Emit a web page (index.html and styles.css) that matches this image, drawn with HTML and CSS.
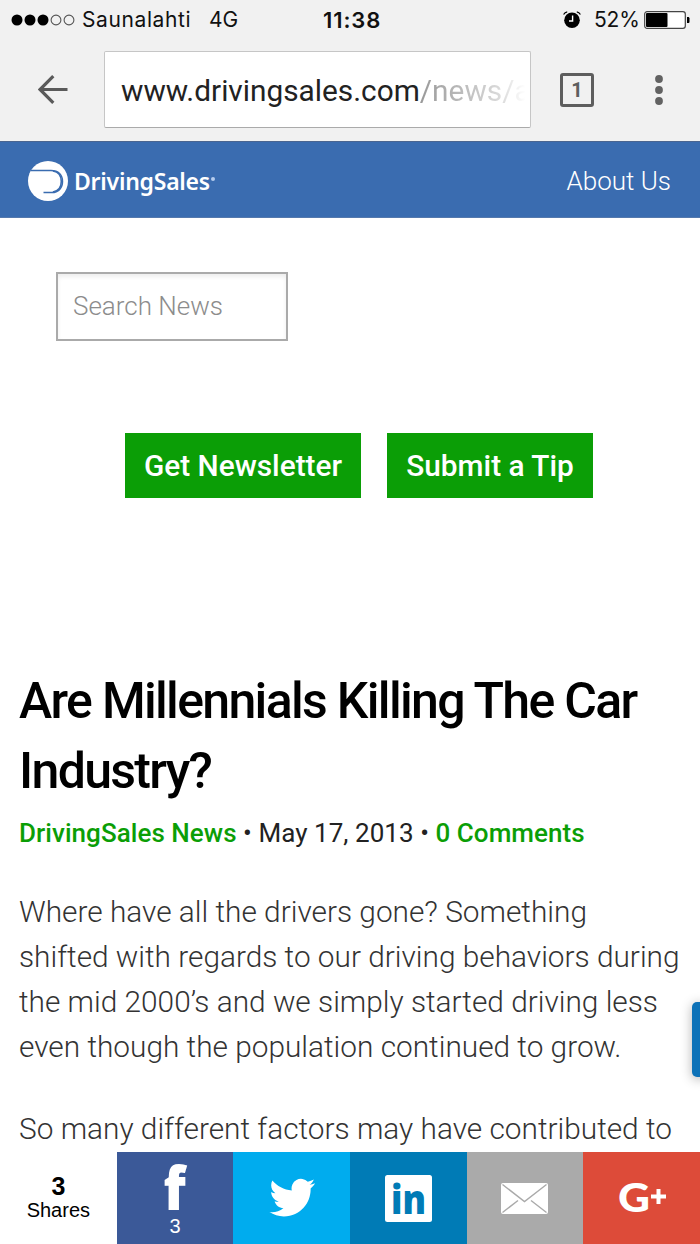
FILE: index.html
```html
<!DOCTYPE html>
<html lang="en">
<head>
    <meta charset="utf-8">
    <title>Are Millennials Killing The Car Industry?</title>
    <link rel="stylesheet" href="styles.css">
</head>
<body>
    <div class="screen">
        <!-- Status bar -->
        <div class="status">
            <svg class="signal" width="64" height="12" viewBox="0 0 64 12">
                <circle cx="6" cy="6" r="5.5"/>
                <circle cx="19" cy="6" r="5.5"/>
                <circle cx="32" cy="6" r="5.5"/>
                <circle class="empty" cx="45" cy="6" r="4.9"/>
                <circle class="empty" cx="58" cy="6" r="4.9"/>
            </svg>
            <span class="carrier">Saunalahti</span>
            <span class="network">4G</span>
            <span class="time">11:38</span>
            <svg class="alarm" width="18" height="18" viewBox="0 0 18 18">
                <circle cx="9" cy="9.3" r="7.8"/>
                <path class="bell" d="M0.6 3.6C1.4 2 2.6 1 4.2 0.8M17.4 3.6C16.6 2 15.4 1 13.8 0.8"/>
                <path class="hands" d="M9.6 4.6V10H6"/>
            </svg>
            <span class="percent">52%</span>
            <svg class="battery" width="46" height="18" viewBox="0 0 46 18">
                <rect x="0.7" y="0.7" width="40.6" height="16.6" rx="2.4" fill="#fff" stroke="#444" stroke-width="1.2"/>
                <rect x="2" y="2" width="21.5" height="14" rx="1"/>
                <path d="M43 6h1c1 0 1.5.6 1.5 1.5v3c0 1-.5 1.5-1.5 1.5h-1z"/>
            </svg>
        </div>

        <!-- Browser toolbar -->
        <div class="toolbar">
            <svg class="back" width="32" height="32" viewBox="0 0 32 32">
                <path d="M15.3 2.2L2 15.5L15.3 28.8M2.5 15.5H29.5"/>
            </svg>
            <div class="url">www.drivingsales.com<span class="path">/news/a</span></div>
            <div class="tabs">1</div>
            <svg class="more" width="8" height="30" viewBox="0 0 8 30">
                <circle cx="4" cy="4" r="3.9"/>
                <circle cx="4" cy="15" r="3.9"/>
                <circle cx="4" cy="26" r="3.9"/>
            </svg>
        </div>

        <div class="header">
            <div class="logo">
                <svg width="40" height="42" viewBox="0 0 40 42">
                    <circle cx="20" cy="21" r="20" fill="#fff"/>
                    <path d="M3 10.6H23C30.5 10.6 34.5 15 34.5 21.5C34.5 28.5 30 32.5 24 32.5H15.5" fill="none" stroke="#3a6cb0" stroke-width="1.5"/>
                    <path d="M25 11C31 12 33.3 16 33.3 21.5C33.3 27 30.5 31 25 32" fill="none" stroke="#3a6cb0" stroke-width="1.6"/>
                </svg>
                <span class="logo-text">DrivingSales</span>
                <span class="logo-mark"></span>
            </div>
            <a class="about">About Us</a>
        </div>

        <input class="search" placeholder="Search News">

        <div class="buttons">
            <a class="btn newsletter">Get Newsletter</a>
            <a class="btn tip">Submit a Tip</a>
        </div>

        <div class="article">
            <h1>Are Millennials Killing The Car<br>Industry?</h1>
            <div class="meta"><b>DrivingSales News</b> • May 17, 2013 • <b>0 Comments</b></div>
            <p>
                Where have all the drivers gone? Something<br>
                shifted with regards to our driving behaviors during<br>
                the mid 2000’s and we simply started driving less<br>
                even though the population continued to grow.
            </p>
            <p>So many different factors may have contributed to</p>
        </div>

        <div class="side-tab"></div>

        <!-- Share buttons -->
        <div class="share">
            <div class="total">
                <strong>3</strong>
                <span>Shares</span>
            </div>
            <div class="facebook">
                <svg width="60" height="56" viewBox="0 0 60 56">
                    <text class="f-icon" transform="translate(18.5 52) scale(0.9 1)">f</text>
                </svg>
                <span>3</span>
            </div>
            <div class="twitter">
                <svg width="48" height="40" viewBox="0 0 24 20">
                    <path fill="#fff" d="M23.5 2.6c-.9.4-1.8.6-2.7.8 1-.6 1.7-1.5 2.1-2.6-.9.5-1.9.9-3 1.1A4.7 4.7 0 0 0 11.9 6.2C8 6 4.5 4.1 2.2 1.3 1 3.4 1.6 6.2 3.7 7.6c-.8 0-1.5-.2-2.1-.6 0 2.3 1.6 4.3 3.8 4.7-.7.2-1.4.2-2.1.1.6 1.9 2.3 3.2 4.4 3.3A9.5 9.5 0 0 1 .7 17c2.1 1.4 4.6 2.2 7.2 2.2 8.8 0 13.7-7.4 13.4-14 .9-.7 1.7-1.600 2.200-2.600z"/>
                </svg>
            </div>
            <div class="linkedin">
                <svg width="47" height="67" viewBox="0 -10 47 67">
                    <rect width="47" height="47" rx="2.5" fill="#fff"/>
                    <text class="in-icon" x="6" y="38.5" textLength="35" lengthAdjust="spacingAndGlyphs">in</text>
                </svg>
            </div>
            <div class="email">
                <svg width="47" height="31" viewBox="0 0 47 31">
                    <rect width="47" height="31" rx="2" fill="#fff"/>
                    <path d="M1.5 1.5L23.5 18.5L45.5 1.5M1.5 29.5L17 17.5M45.5 29.5L30 17.5" fill="none" stroke="#aaa" stroke-width="1.4"/>
                </svg>
            </div>
            <div class="google">
                <svg width="50" height="60" viewBox="-1 -13 50 60">
                    <text class="g-icon" x="0" y="30.5" textLength="32" lengthAdjust="spacingAndGlyphs">G</text>
                    <path d="M40.5 8v15M33 15.5h15" stroke="#fff" stroke-width="4"/>
                </svg>
            </div>
        </div>
    </div>
</body>
</html>
```
FILE: styles.css
```css
body {
    margin: 0;
    background: #fff;
    font-family: Roboto, sans-serif;
}

.screen {
    position: relative;
    height: 1244px;
    overflow: hidden;
}

/* Status bar */
.status {
    display: flex;
    align-items: center;
    height: 39px;
    padding-left: 11px;
    background: #f1f1f1;
    font-family: Inter, sans-serif;
    font-size: 21px;
    color: #111;
    white-space: nowrap;
}

.signal .empty {
    fill: none;
    stroke: #555;
    stroke-width: 1.1;
}

.carrier {
    width: 127px;
    margin-left: 7px;
    letter-spacing: 0.6px;
}

.network {
    width: 114px;
}

.time {
    width: 240px;
    font-size: 22px;
    font-weight: 600;
    letter-spacing: 0.9px;
}

.alarm .bell {
    fill: none;
    stroke: #000;
    stroke-width: 1.2;
}

.alarm .hands {
    fill: none;
    stroke: #fff;
    stroke-width: 1.4;
}

.percent {
    width: 50px;
    margin-left: 13px;
    letter-spacing: -0.2px;
}

/* Browser toolbar */
.toolbar {
    display: flex;
    align-items: center;
    box-sizing: border-box;
    height: 102px;
    padding: 0 0 1px 38px;
    background: #f1f1f1;
}

.back {
    fill: none;
    stroke: #5a5a5a;
    stroke-width: 3.2;
}

.url {
    box-sizing: border-box;
    width: 427px;
    height: 77px;
    margin-left: 34px;
    padding-left: 16px;
    border: 1px solid #c6c6c6;
    border-bottom-color: #aaa;
    border-radius: 2px;
    background: #fff;
    color: #222;
    font-size: 29.8px;
    line-height: 77px;
    white-space: nowrap;
}

.url .path {
    background: linear-gradient(90deg, #999, #ddd 75%, #fff 95%);
    -webkit-background-clip: text;
    background-clip: text;
    color: transparent;
}

.tabs {
    box-sizing: border-box;
    width: 34px;
    height: 34px;
    margin-left: 29px;
    border: 3px solid #5e5e5e;
    border-radius: 3px;
    color: #5e5e5e;
    font-size: 20px;
    font-weight: 700;
    line-height: 28px;
    text-align: center;
}

.more {
    margin-left: 61px;
    fill: #626262;
}

/* Site header */
.header {
    display: flex;
    align-items: center;
    justify-content: space-between;
    box-sizing: border-box;
    height: 77px;
    padding: 3px 29px 0 28px;
    border-top: 1px solid #4a6590;
    border-bottom: 1px solid #5579ad;
    background: #3a6cb0;
    color: #fff;
}

.logo {
    display: flex;
    align-items: center;
}

.logo-text {
    margin-left: 6px;
    font-family: "Noto Sans", sans-serif;
    font-size: 23px;
    font-weight: 600;
    letter-spacing: -0.25px;
}

.logo-mark {
    width: 4px;
    height: 4px;
    margin: -5px 0 0 1px;
    border-radius: 50%;
    background: #b5cdee;
}

.about {
    font-size: 26px;
    font-weight: 300;
}

.search {
    display: block;
    box-sizing: border-box;
    width: 232px;
    height: 69px;
    margin: 54px 0 0 56px;
    padding: 0 15px 1px;
    border: 2px solid #aaa;
    box-shadow: inset 0 3px 4px #eee;
    font-family: Roboto, sans-serif;
    font-size: 26px;
    font-weight: 300;
}

.search::placeholder {
    color: #8c8c8c;
    opacity: 1;
}

.buttons {
    display: flex;
    gap: 26px;
    margin: 92px 0 0 125px;
}

.btn {
    height: 65px;
    background: #0b9e06;
    color: #fff;
    font-size: 29.8px;
    font-weight: 500;
    line-height: 66px;
    text-align: center;
    white-space: nowrap;
}

.newsletter {
    width: 236px;
}

.tip {
    width: 206px;
}

/* Article */
.article {
    padding: 168px 0 0 19px;
    white-space: nowrap;
}

h1 {
    margin: 0;
    color: #000;
    font-size: 50px;
    font-weight: 500;
    line-height: 70px;
    letter-spacing: -1.67px;
}

.meta {
    margin-top: 6px;
    color: #222;
    font-size: 26px;
    line-height: 42px;
    letter-spacing: 0.05px;
}

.meta b {
    color: #0b9e06;
    font-weight: 500;
}

p {
    margin: 35px 0 37px;
    color: #333;
    font-size: 29.8px;
    font-weight: 300;
    line-height: 45px;
}

.side-tab {
    position: absolute;
    top: 1002px;
    right: -8px;
    width: 16px;
    height: 75px;
    border-radius: 5px;
    background: #0d72b8;
    box-shadow: 0 2px 12px rgba(0, 0, 0, 0.3);
}

/* Share bar fixed over the article */
.share {
    position: absolute;
    bottom: 0;
    left: 0;
    display: grid;
    grid-template-columns: repeat(6, 1fr);
    width: 700px;
    height: 92px;
    font-family: "Liberation Sans", sans-serif;
}

.share > div {
    display: flex;
    flex-direction: column;
    align-items: center;
    justify-content: center;
}

.total {
    background: #fff;
    color: #000;
    font-size: 20px;
    line-height: 24px;
}

.total strong {
    font-size: 25px;
}

.facebook {
    background: #3b5998;
    color: #fff;
    font-size: 20px;
    line-height: 24px;
}

.facebook svg {
    overflow: visible;
}

.twitter {
    background: #00acee;
}

.linkedin {
    background: #007bb6;
}

.email {
    background: #aaa;
}

.google {
    background: #dd4b39;
}

.f-icon {
    fill: #fff;
    font-family: "Open Sans", sans-serif;
    font-size: 60px;
    font-weight: 800;
}

.in-icon {
    fill: #007bb6;
    font-family: "Open Sans", sans-serif;
    font-size: 40px;
    font-weight: 800;
}

.g-icon {
    fill: #fff;
    font-family: Lato, sans-serif;
    font-size: 40px;
    font-weight: 900;
}
```
